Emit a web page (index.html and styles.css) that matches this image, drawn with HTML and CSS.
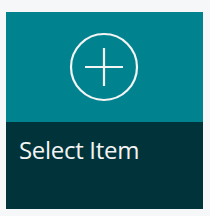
FILE: index.html
```html
<!DOCTYPE html>
<html>
<head>
<meta charset="utf-8">
<link rel="stylesheet" href="styles.css">
</head>
<body>
<div class="tile">
  <div class="tile-top">
    <svg class="add-icon" width="70" height="70" viewBox="0 0 70 70">
      <circle cx="35" cy="35" r="33" fill="none" stroke="#f4f4f4" stroke-width="2.2"/>
      <line x1="16" y1="35" x2="54" y2="35" stroke="#f4f4f4" stroke-width="2.2"/>
      <line x1="35" y1="16" x2="35" y2="54" stroke="#f4f4f4" stroke-width="2.2"/>
    </svg>
  </div>
  <div class="tile-bottom">
    <span class="label">Select Item</span>
  </div>
</div>
</body>
</html>
```
FILE: styles.css
```css
html, body {
  margin: 0;
  padding: 0;
  background: #f5f7f9;
}
body {
  padding: 12px 0 0 6px;
}
.tile {
  width: 197px;
  height: 197px;
  display: flex;
  flex-direction: column;
}
.tile-top {
  height: 110px;
  background: #00838f;
  display: flex;
  align-items: center;
  justify-content: center;
}
.add-icon {
  display: block;
  margin-left: -2px;
}
.tile-bottom {
  flex: 1;
  background: #00343a;
  padding: 13px 0 0 13px;
}
.label {
  font-family: "Open Sans", sans-serif;
  font-size: 24px;
  letter-spacing: -0.3px;
  line-height: 30px;
  color: #f4f4f4;
}
```
